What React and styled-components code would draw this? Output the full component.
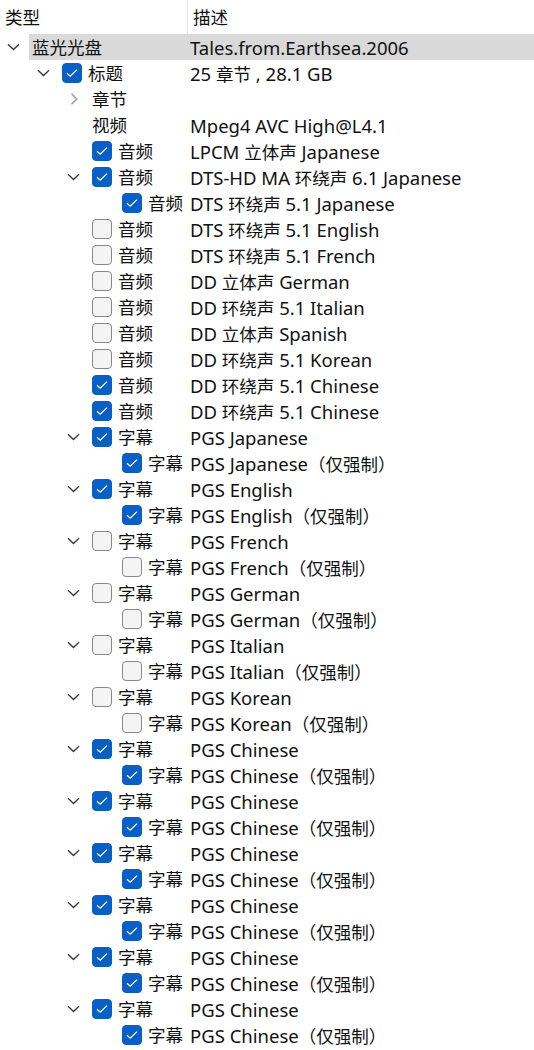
import React from "react";
import styled, { createGlobalStyle } from "styled-components";

const GlobalStyle = createGlobalStyle`
  html, body {
    margin: 0;
    padding: 0;
    background: #ffffff;
  }
  body {
    font-family: "Noto Sans", "Noto Sans CJK SC", sans-serif;
    font-size: 18.5px;
    color: #111111;
  }
`;

const COL1 = 187;
const STEP = 30;
const BRANCH = 29;

const Tree = styled.div`
  width: 534px;
  height: 1050px;
  overflow: hidden;
  background: #ffffff;
`;

const Header = styled.div`
  display: grid;
  grid-template-columns: ${COL1}px 1fr;
  height: 34px;
`;

const HeaderCell = styled.div`
  display: flex;
  align-items: center;
  padding-left: 5px;
  border-left: ${(p) => (p.$first ? "none" : "1px solid #e5e5e5")};
  line-height: 1;
  padding-bottom: 1px;
`;

const Row = styled.div`
  display: flex;
  height: 26px;
  align-items: stretch;
`;

const Indent = styled.div`
  flex: none;
  width: ${(p) => p.$level * STEP}px;
`;

const Branch = styled.div`
  flex: none;
  width: ${BRANCH}px;
  display: flex;
  align-items: center;
  padding-left: 7px;
  box-sizing: border-box;
`;

const Item = styled.div`
  flex: 1;
  display: flex;
  align-items: center;
  background: ${(p) => (p.$selected ? "#d9d9d9" : "transparent")};
`;

const TypeCell = styled.div`
  flex: none;
  width: ${(p) => COL1 - p.$level * STEP - BRANCH}px;
  box-sizing: border-box;
  padding-left: 3px;
  display: flex;
  align-items: center;
  gap: 6px;
  white-space: nowrap;
`;

const DescCell = styled.div`
  flex: 1;
  padding-left: 3px;
  white-space: nowrap;
`;

const Label = styled.span`
  line-height: 1;
`;

const Cjk = styled.span`
  font-family: "Noto Sans CJK SC", sans-serif;
  font-size: 17.5px;
`;

const Box = styled.span`
  flex: none;
  width: 20px;
  height: 20px;
  box-sizing: border-box;
  border-radius: 4px;
  display: flex;
  align-items: center;
  justify-content: center;
  background: ${(p) => (p.$checked ? "#0a5fc4" : "#f4f4f4")};
  border: 1px solid ${(p) => (p.$checked ? "#0a5fc4" : "#878787")};
`;

// CJK runs get their own span so Latin and CJK can be sized apart
function Text({ children }) {
  const parts = String(children).split(/([\u3000-\u9fff\uff00-\uffef]+)/);
  return parts.map((part, i) =>
    i % 2 === 1 ? <Cjk key={i}>{part}</Cjk> : part
  );
}

function Chevron({ open }) {
  if (open) {
    return (
      <svg width="13" height="8" viewBox="0 0 13 8">
        <polyline
          points="1,1.2 6.5,6.6 12,1.2"
          fill="none"
          stroke="#3a3a3a"
          strokeWidth="1.4"
        />
      </svg>
    );
  }
  return (
    <svg width="13" height="12" viewBox="0 0 13 12">
      <polyline
        points="4.5,0.8 9.8,6 4.5,11.2"
        fill="none"
        stroke="#9a9a9a"
        strokeWidth="1.4"
      />
    </svg>
  );
}

function Check({ checked }) {
  return (
    <Box $checked={checked}>
      {checked && (
        <svg width="12" height="10" viewBox="0 0 12 10">
          <polyline
            points="1,5.2 4.2,8.2 11,1.6"
            fill="none"
            stroke="#ffffff"
            strokeWidth="1.2"
          />
        </svg>
      )}
    </Box>
  );
}

const rows = [
  { level: 0, exp: "open", type: "蓝光光盘", desc: "Tales.from.Earthsea.2006", selected: true },
  { level: 1, exp: "open", check: true, type: "标题", desc: "25 章节 , 28.1 GB" },
  { level: 2, exp: "closed", type: "章节", desc: "" },
  { level: 2, type: "视频", desc: "Mpeg4 AVC High@L4.1" },
  { level: 2, check: true, type: "音频", desc: "LPCM 立体声 Japanese" },
  { level: 2, exp: "open", check: true, type: "音频", desc: "DTS-HD MA 环绕声 6.1 Japanese" },
  { level: 3, check: true, type: "音频", desc: "DTS 环绕声 5.1 Japanese" },
  { level: 2, check: false, type: "音频", desc: "DTS 环绕声 5.1 English" },
  { level: 2, check: false, type: "音频", desc: "DTS 环绕声 5.1 French" },
  { level: 2, check: false, type: "音频", desc: "DD 立体声 German" },
  { level: 2, check: false, type: "音频", desc: "DD 环绕声 5.1 Italian" },
  { level: 2, check: false, type: "音频", desc: "DD 立体声 Spanish" },
  { level: 2, check: false, type: "音频", desc: "DD 环绕声 5.1 Korean" },
  { level: 2, check: true, type: "音频", desc: "DD 环绕声 5.1 Chinese" },
  { level: 2, check: true, type: "音频", desc: "DD 环绕声 5.1 Chinese" },
];

const subs = [
  ["Japanese", true],
  ["English", true],
  ["French", false],
  ["German", false],
  ["Italian", false],
  ["Korean", false],
  ["Chinese", true],
  ["Chinese", true],
  ["Chinese", true],
  ["Chinese", true],
  ["Chinese", true],
  ["Chinese", true],
];

subs.forEach(([lang, on]) => {
  rows.push({ level: 2, exp: "open", check: on, type: "字幕", desc: `PGS ${lang}` });
  rows.push({ level: 3, check: on, type: "字幕", desc: `PGS ${lang}（仅强制）` });
});

export default function App() {
  return (
    <>
      <GlobalStyle />
      <Tree>
        <Header>
          <HeaderCell $first><Text>类型</Text></HeaderCell>
          <HeaderCell><Text>描述</Text></HeaderCell>
        </Header>
        {rows.map((r, i) => (
          <Row key={i}>
            <Indent $level={r.level} />
            <Branch>{r.exp && <Chevron open={r.exp === "open"} />}</Branch>
            <Item $selected={r.selected}>
              <TypeCell $level={r.level}>
                {r.check !== undefined && <Check checked={r.check} />}
                <Label><Text>{r.type}</Text></Label>
              </TypeCell>
              <DescCell><Text>{r.desc}</Text></DescCell>
            </Item>
          </Row>
        ))}
      </Tree>
    </>
  );
}
